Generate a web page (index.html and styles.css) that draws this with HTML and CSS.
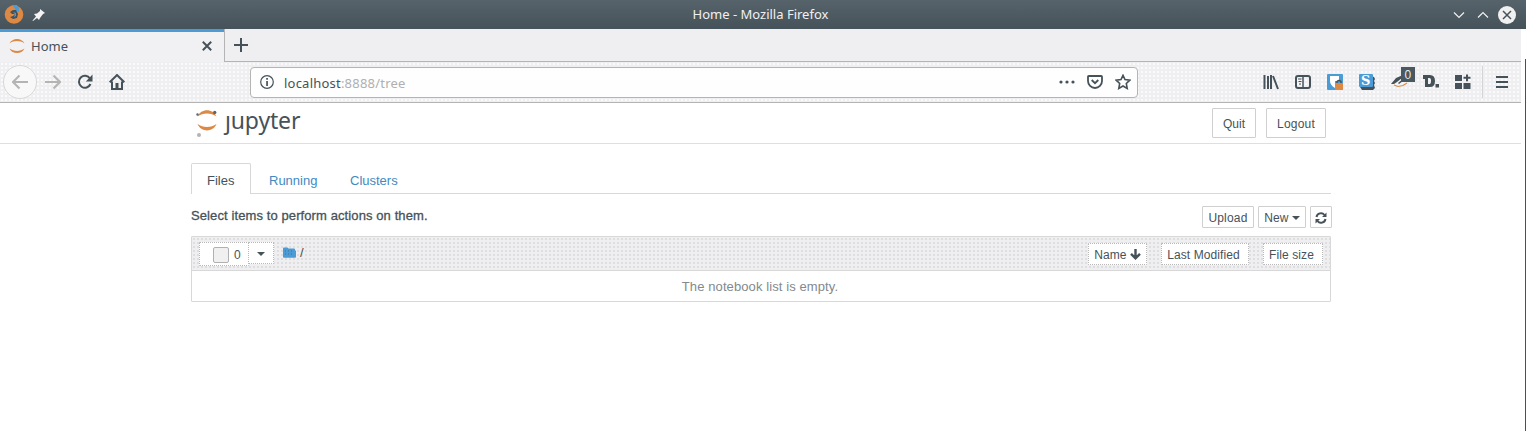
FILE: index.html
```html
<!DOCTYPE html>
<html lang="en">
<head>
<meta charset="utf-8">
<title>Home</title>
<link rel="stylesheet" href="styles.css">
</head>
<body>
<div class="window">
  <header class="titlebar">
    <div class="title-left">
      <svg width="20" height="20" viewBox="0 0 20 20"><circle cx="10" cy="9.500" r="9.300" fill="#dd8843"/><path d="M7 0h6l2 3v4l-3-1-2-4z" fill="#4b9bd6"/><path d="m6 7 3-2 3 0 2 4-1 4-4 1-3-2 3-1 2-2-3 0z" fill="#465259"/><path d="m9 7 3 1 0 3-2 1 1-3z" fill="#4b9bd6"/></svg>
      <svg class="pin" width="14" height="14" viewBox="0 0 14 14"><path d="m8 1 5 4-2 1-3 4-1 2-2-2-4 3-.5-.5L4 8.500 2 6l3-.5L8 3z" fill="#f4f4f4"/></svg>
    </div>
    <div class="window-title"><span>Home - Mozilla Firefox</span></div>
    <div class="title-right">
      <svg width="12" height="8" viewBox="0 0 12 8"><path d="m1 1.500 5 5 5-5" class="light-line"/></svg>
      <svg width="12" height="8" viewBox="0 0 12 8"><path d="m1 6.500 5-5 5 5" class="light-line"/></svg>
      <svg width="18" height="18" viewBox="0 0 18 18"><circle cx="9" cy="9" r="9" fill="#f0f0f1"/><path d="m5 5 8 8m0-8-8 8" stroke="#465259" stroke-width="1.500"/></svg>
    </div>
  </header>

  <div class="body-row">
  <div class="browser">
    <div class="tabstrip">
      <div class="tab">
        <svg width="16" height="16" viewBox="0 0 16 16"><path d="M.5 5.500C3-.5 13-.5 15.500 5.500 11 2.300 5 2.300.5 5.500zM.5 10.500C3 16.500 13 16.500 15.500 10.500 11 13.700 5 13.700.5 10.500z" fill="#dd8843"/></svg>
        <span class="tab-title">Home</span>
        <svg width="10" height="10" viewBox="0 0 10 10"><path d="m.8.8 8.400 8.400m0-8.400L.8 9.200" class="stroke2"/></svg>
      </div>
      <div class="newtab"><svg width="14" height="14" viewBox="0 0 14 14"><path d="M7 0v14M0 7h14" class="stroke2"/></svg></div>
    </div>
    <nav class="toolbar">
      <span class="back"><svg width="16" height="16" viewBox="0 0 16 16"><path d="M16 8H1M7.500 1.500 1 8l6.500 6.500" class="muted"/></svg></span>
      <svg class="fwd" width="16" height="16" viewBox="0 0 16 16"><path d="M0 8h15M8.500 1.500 15 8l-6.500 6.500" class="muted"/></svg>
      <svg class="reload" width="16" height="16" viewBox="0 0 16 16"><path d="M13 4.500A6 6 0 1 0 13.500 10" class="stroke2"/><path d="M15.500.5v7H8.800z" fill="#465259"/></svg>
      <svg class="home" width="16" height="16" viewBox="0 0 16 16"><path d="M.7 8.300 8 1l7.300 7.300M3 7.500V15h10V7.500" class="stroke2"/><path d="M6.500 9h3v6h-3z" fill="#465259"/></svg>
      <div class="urlbar">
        <svg width="14" height="14" viewBox="0 0 14 14"><circle cx="7" cy="7" r="6.300" fill="none" stroke="#465259" stroke-width="1.200"/><path d="M6.200 3h1.700v1.700H6.200zm0 3h1.700v5H6.200z" fill="#465259"/></svg>
        <span class="url"><span class="host">localhost</span>:8888/tree</span>
        <svg class="dots" width="16" height="4" viewBox="0 0 16 4"><circle cx="2" cy="2" r="1.600"/><circle cx="8" cy="2" r="1.600"/><circle cx="14" cy="2" r="1.600"/></svg>
        <svg class="pocket" width="16" height="14" viewBox="0 0 16 14"><path d="M1.800 1h12.400q.8 0 .8.800V6a7 7 0 0 1-14 0V1.800q0-.8.800-.8z" class="stroke18"/><path d="M4.700 5 8 8.200 11.300 5" class="stroke18"/></svg>
        <svg class="star" width="16" height="16" viewBox="0 0 16 16"><path d="m8 1.300 2 4.300 4.800.6-3.500 3.300.9 4.900L8 12l-4.200 2.400.9-4.900L1.200 6.200 6 5.600z" class="stroke16"/></svg>
      </div>
      <div class="tools">
        <svg width="16" height="16" viewBox="0 0 16 16"><path d="M1.500 1v14M5 2v13M8 1v14m2-13 5 13" class="stroke2"/></svg>
        <svg width="16" height="16" viewBox="0 0 16 16"><rect x="1" y="2" width="14" height="12" rx="2" class="stroke2"/><path d="M8 2v12" stroke="#465259" stroke-width="1.500"/><path d="M3 5h3.500M3.500 7.500h3M4 10h2" stroke="#465259"/></svg>
        <svg width="16" height="16" viewBox="0 0 16 16"><rect width="16" height="16" rx="1" fill="#4b9bd6"/><path d="M3 2h9v5H8v7Q3 11 3 7z" fill="#fff"/><path d="M8 9h8v7H8z" fill="#dd8843"/><path d="M10 9V7.500q2-2 4 0V9" fill="none" stroke="#465259" stroke-width="1.400"/></svg>
        <svg width="16" height="16" viewBox="0 0 16 16"><path d="m1 13 2 3h11l2-2-1-3 1-2-1-2 1-2-1-2-2-1z" fill="#465259"/><rect width="14" height="13" rx="1" fill="#4b9bd6"/><text x="2" y="11" class="ext-s">S</text></svg>
        <svg class="badger" width="26" height="22" viewBox="0 0 26 22"><path d="m1 17 5-6 7-3 4 9-6 3-8-1z" fill="#f4f4f4"/><path d="m0 17 5-6 7-3-1 3-5 4-3 2zM7 16l6-5 4 2-1 2-4-1-4 3z" fill="#465259"/><path d="m3 18 4 1.500 5-1 4-2.500" stroke="#dd8843" stroke-width="1.200" fill="none"/><path d="M10 0h14v15H10z" fill="#4a5860"/><text x="13.500" y="11.500" class="badge-text">0</text></svg>
        <svg class="dark-reader" width="20" height="18" viewBox="0 0 20 18"><path d="M1 2h7q5 0 5 6t-5 6H3V6H1zm5 3v6h1.500q1.500 0 1.500-3T7.500 5zM13.500 11H17v3.500h-3.500z" fill="#465259" fill-rule="evenodd"/></svg>
        <svg width="16" height="16" viewBox="0 0 16 16"><path d="M0 1h7v6H0zM0 9h7v6H0zM8.500 9h7v6h-7zM11 .5h2v2.300h2.500v2H13v2.500h-2V4.800H8.500v-2H11z" fill="#465259"/></svg>
        <i class="sep"></i>
        <svg width="12" height="12" viewBox="0 0 12 12"><path d="M0 1h12M0 6h12M0 11h12" class="stroke2"/></svg>
      </div>
    </nav>

    <div class="page">
      <div class="page-header">
        <div class="container head-row">
          <div class="logo">
            <svg width="24" height="30" viewBox="0 0 24 30"><path d="M2.500 9.500C6 1 18 1 21.500 9.500 16 5.500 8 5.500 2.500 9.500zM2.500 17C6 25.500 18 25.500 21.500 17 16 21 8 21 2.500 17z" fill="#dd8843"/><circle cx="19.700" cy="5.500" r="1.700" fill="#5c666c"/><circle cx="2.500" cy="7.500" r="1.200" fill="#5c666c"/><circle cx="4" cy="28" r="2" fill="#b4b4b4"/></svg>
            <span class="wordmark">ȷupyter</span>
          </div>
          <div class="session"><button class="btn quit">Quit</button><button class="btn logout">Logout</button></div>
        </div>
      </div>
      <main class="container">
        <div class="tabs"><a class="nav-tab active">Files</a><a class="nav-tab running">Running</a><a class="nav-tab clusters">Clusters</a></div>
        <div class="actions">
          <span class="hint">Select items to perform actions on them.</span>
          <div class="action-buttons">
            <button class="btn upload">Upload</button>
            <button class="btn new">New <i class="caret"></i></button>
            <button class="btn refresh"><svg width="12" height="12" viewBox="0 0 12 12"><path d="M1.500 5A4.500 4.500 0 0 1 9.500 3M10.500 7A4.500 4.500 0 0 1 2.500 9" class="stroke2"/><path d="M11.500.5V5H7zM.5 11.500V7H5z" fill="#465259"/></svg></button>
          </div>
        </div>
        <div class="list">
          <div class="list-head">
            <button class="btn select"><i class="check"></i>0</button><button class="btn drop"><i class="caret"></i></button>
            <svg class="folder" width="13" height="11" viewBox="0 0 13 11"><path d="M0 1.500Q0 .5 1 .5h3.500l1 1H11q1 0 1 1v1h1v6.500q0 .8-1 .8H1q-1 0-1-1z" fill="#4b9bd6"/><path d="M2 4h9M2 7h9" stroke="#46708f" stroke-dasharray="1 2"/></svg>
            <span class="crumb">/</span>
            <div class="sorts">
              <button class="btn name">Name <svg width="11" height="11" viewBox="0 0 11 11"><path d="M5.500 0v9M1 4.800l4.500 4.500L10 4.800" fill="none" stroke="#465259" stroke-width="2.400"/></svg></button>
              <button class="btn modified">Last Modified</button>
              <button class="btn size">File size</button>
            </div>
          </div>
          <div class="empty">The notebook list is empty.</div>
        </div>
      </main>
    </div>
  </div>
  <div class="edge"></div>
  </div>
</div>
</body>
</html>
```

FILE: styles.css
```css
* { box-sizing: border-box; }
body { margin: 0; background: #fff; color: #465259; font: 13px "Liberation Sans", sans-serif; overflow: hidden; }
svg { display: block; flex: none; }
.window { width: 1526px; height: 431px; }
.stroke2 { fill: none; stroke: #465259; stroke-width: 2; }
.stroke18 { fill: none; stroke: #465259; stroke-width: 1.8; }
.stroke16 { fill: none; stroke: #465259; stroke-width: 1.6; }
.muted { fill: none; stroke: #b4b4b4; stroke-width: 2; }
.light-line { fill: none; stroke: #f0f0f1; stroke-width: 1.2; }

.titlebar { display: grid; grid-template-columns: 120px 1fr 120px; align-items: center; height: 29px; background: linear-gradient(#56636b, #465259); }
.title-left { display: flex; align-items: center; padding-left: 4px; height: 27px; }
.pin { margin-left: 8px; }
.window-title { text-align: center; color: #f0f0f1; font: 13px/28px "Noto Sans", sans-serif; height: 29px; padding-right: 5px; }
.title-right { display: flex; justify-content: flex-end; align-items: center; gap: 12px; padding-right: 10px; height: 27px; }
.title-right svg:last-child { margin-left: -3px; }

.body-row { display: flex; height: 402px; }
.browser { width: 1521px; }
.edge { width: 5px; border-right: 1px solid #465259; background: #fff; margin-top: 30px; }

.tabstrip { display: flex; height: 33px; background: #efeff1; }
.tab { display: flex; align-items: center; width: 224px; padding: 0 12px 0 9px; border-top: 3px solid #4b9bd6; background: #f1f1f3; height: 33px; padding-bottom: 2px; }
.tab-title { flex: 1; padding-left: 6px; font: 13px "Noto Sans", sans-serif; }
.newtab { flex: 1; border-left: 1px solid #b4b4b4; border-bottom: 1px solid #b4b4b4; padding: 9px 0 0 9px; }
.toolbar { display: flex; align-items: center; height: 41px; background: #efeff1 radial-gradient(circle at 2px 2px, #fafafb .8px, transparent 1px) 0 0 / 4px 4px; border-bottom: 1px solid #b4b4b4; }
.back { display: grid; place-items: center; width: 34px; height: 34px; margin-left: 3px; border: 1px solid #d8d8d8; border-radius: 50%; background: #f8f8f8; }
.fwd { margin-left: 8px; }
.reload, .home { margin-left: 16px; }
.urlbar { display: flex; align-items: center; width: 888px; height: 31px; margin-left: 125px; padding: 0 6px 0 9px; border: 1px solid #b4b4b4; border-radius: 4px; background: #fefefe; }
.url { flex: 1; margin-left: 10px; padding-top: 2px; color: #b0b0b0; font: 13px "Noto Sans", sans-serif; letter-spacing: .22px; }
.host { color: #465259; }
.dots { fill: #465259; }
.pocket, .star { margin-left: 12px; }
.tools { display: flex; align-items: center; gap: 16px; margin-left: 125px; }
.badger { margin: -8px -9px 0 0; }
.dark-reader { margin: 0 -3px 0 -2px; }
.sep { width: 1px; height: 32px; margin: 0 -3px 0 -5px; background: #d4d4d6; }
.ext-s { font: 900 13px "DejaVu Serif", serif; fill: #fff; }
.badge-text { font: 12px "Liberation Sans", sans-serif; fill: #e8e8e8; }

.page { background: #fff; }
.container { width: 1140px; margin-left: 191px; }
.page-header { height: 41px; border-bottom: 1px solid #dfdfdf; }
.head-row { display: flex; justify-content: space-between; }
.logo { display: flex; padding: 4px 0 0 4px; }
.wordmark { margin: -3px 0 0 6px; font: 23px/32px "Noto Sans", sans-serif; letter-spacing: -.15px; }
.session { display: flex; gap: 10px; padding: 5px 5px 0 0; }
.btn { display: flex; align-items: center; justify-content: center; height: 22px; padding: 1px 0 0; border: 1px solid #cfcfcf; border-radius: 1px; background: #fff; color: #465259; font: 12px "Liberation Sans", sans-serif; white-space: pre; }
.quit, .logout { height: 30px; }
.quit { width: 44px; }
.logout { width: 60px; letter-spacing: .2px; }

.tabs { display: flex; height: 31px; margin-top: 19px; border-bottom: 1px solid #d8d8d8; }
.nav-tab { height: 30px; line-height: 33px; color: #4389c2; }
.active { width: 60px; height: 31px; padding-left: 15px; border: 1px solid #d8d8d8; border-bottom: 0; border-radius: 2px 2px 0 0; background: #fff; color: #465259; }
.running { margin-left: 18px; width: 81px; padding-top: 1px; }
.clusters { padding-top: 1px; }
.actions { display: flex; justify-content: space-between; height: 42px; padding-top: 12px; }
.hint { padding-top: 2px; letter-spacing: .1px; -webkit-text-stroke: .3px #465259; }
.action-buttons { display: flex; gap: 4px; margin-right: -1px; }
.upload { width: 52px; letter-spacing: .2px; }
.new { width: 48px; }
.refresh { width: 22px; }
.caret { border: 4px solid transparent; border-top-color: #465259; border-bottom: 0; }
.list { height: 66px; border: 1px solid #d8d8d8; border-radius: 1px; }
.list-head { display: flex; align-items: flex-start; height: 34px; padding: 5px 7px 0; background: #efeff1 radial-gradient(circle at 2px 2px, #dedede .8px, transparent 1px) 0 0 / 4px 4px; border-bottom: 1px solid #d8d8d8; }
.list-head .btn { border: 1px dotted #b8b8b8; }
.select { width: 50px; height: 24px; justify-content: flex-start; padding-left: 13px; }
.check { width: 16px; height: 16px; margin-right: 5px; border: 1px solid #b0b0b0; border-radius: 2px; background: #f0f0f1; }
.drop { width: 26px; margin-left: -1px; }
.folder { margin: 5px 0 0 9px; }
.crumb { margin: 3px 0 0 4px; }
.sorts { display: flex; margin-left: auto; padding-top: 1px; }
.name { width: 59px; }
.modified { width: 88px; margin-left: 14px; padding-right: 3px; letter-spacing: .1px; }
.size { width: 60px; margin-left: 14px; padding-right: 3px; letter-spacing: .1px; }
.empty { padding: 1px 2px 0 0; height: 30px; line-height: 30px; text-align: center; letter-spacing: .1px; color: #83898d; }
```
